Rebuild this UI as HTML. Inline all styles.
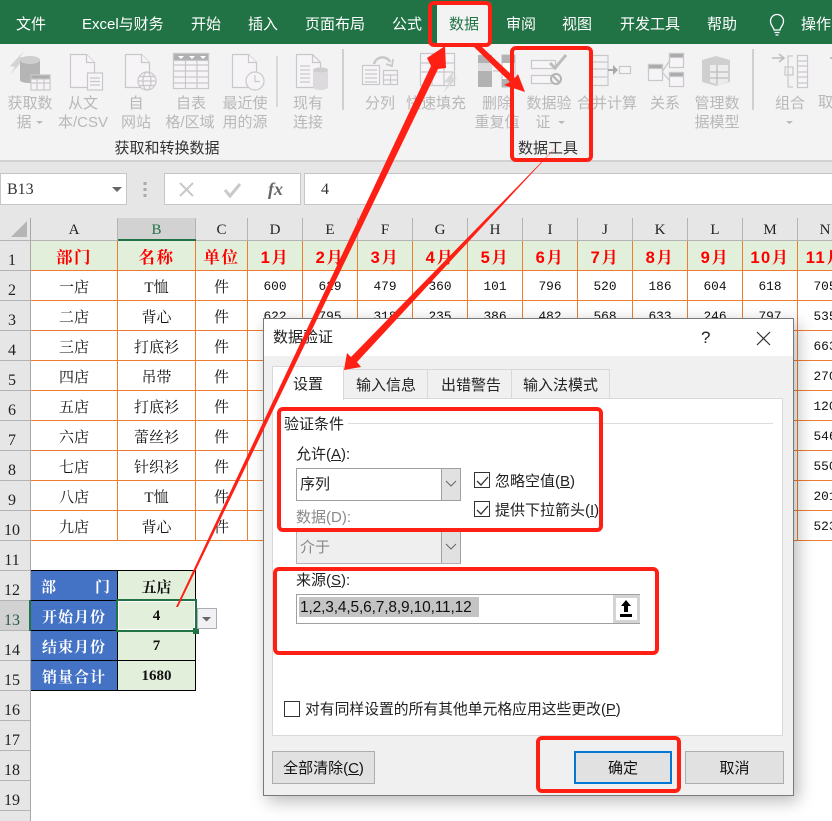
<!DOCTYPE html>
<html lang="zh"><head><meta charset="utf-8"><title>数据验证</title>
<style>
html,body{margin:0;padding:0;background:#fff}
#p{position:relative;width:832px;height:821px;overflow:hidden;background:#fff;font-family:"Liberation Sans","Noto Sans CJK SC",sans-serif;font-size:15px;color:#222}
.t{position:absolute;white-space:nowrap;line-height:20px}
.c{position:absolute;white-space:nowrap;line-height:19px;transform:translateX(-50%);text-align:center}
.tab{color:#fff;top:15px}
.r{color:#b8b8b8}
.b{position:absolute;box-sizing:border-box}
svg{position:absolute;left:0;top:0}
table{position:absolute;border-collapse:separate;border-spacing:0;table-layout:fixed}
#d td{box-sizing:border-box;height:30px;padding:1px 0 0;text-align:center;border-right:1px solid #ed7d31;border-bottom:1px solid #ed7d31;font:15px "Liberation Serif","Noto Serif CJK SC",serif;color:#111}
#d td.n{font:12.800px "Liberation Mono",monospace;padding-top:2px}
#d tr:first-child td{background:#e2efda;color:#f00;font:bold 16.500px "Liberation Sans","Noto Serif CJK SC",serif;letter-spacing:1.500px;padding-top:1px}
#s td{box-sizing:border-box;height:30px;padding:1px 0 0;text-align:center;border-right:1px solid #000;border-bottom:1px solid #000;font:bold 15px "Liberation Serif","Noto Serif CJK SC",serif;color:#111;background:#e2efda}
#s td.h{background:#4472c4;color:#fff;letter-spacing:1px;font-family:"Noto Serif CJK SC",serif}
.rh{position:absolute;left:0;width:30px;height:30px;box-sizing:border-box;border-bottom:1px solid #b4b4b4;background:#e6e6e6;font:16px/26px "Liberation Serif",serif;color:#222;padding-right:6px;text-align:center;padding-top:7px}
.ch{position:absolute;top:218px;height:22px;box-sizing:border-box;border-right:1px solid #b4b4b4;background:#e6e6e6;text-align:center;font:15px/25px "Liberation Serif",serif;color:#222}
.cb{position:absolute;width:16px;height:16px;box-sizing:border-box;border:1px solid #333;background:#fff}
.btn{position:absolute;top:751px;height:33px;box-sizing:border-box;border:1px solid #adadad;background:#e1e1e1;text-align:center;line-height:33px;color:#111}
.u{text-decoration:underline}
</style></head><body><div id="p">

<div class="b" style="left:0;top:0;width:832px;height:44px;background:#217346"></div>
<div class="t tab" style="left:16px">文件</div>
<div class="t tab" style="left:82px">Excel与财务</div>
<div class="t tab" style="left:191px">开始</div>
<div class="t tab" style="left:248px">插入</div>
<div class="t tab" style="left:305px">页面布局</div>
<div class="t tab" style="left:392px">公式</div>
<div class="b" style="left:437px;top:3px;width:54px;height:41px;background:#f3f3f3"></div>
<div class="t" style="left:449px;top:15px;color:#217346">数据</div>
<div class="t tab" style="left:506px">审阅</div>
<div class="t tab" style="left:562px">视图</div>
<div class="t tab" style="left:620px">开发工具</div>
<div class="t tab" style="left:707px">帮助</div>
<div class="t tab" style="left:801px">操作</div>
<svg width="832" height="44" fill="none" stroke="#fff" stroke-width="1.3"><path d="M774 30c0-3-3.500-4-3.500-9a6.500 6.500 0 0 1 13 0c0 5-3.500 6-3.500 9zM774.500 32.500h5M775.500 35h3"/></svg>

<div class="b" style="left:0;top:44px;width:832px;height:116px;background:#f3f3f3"></div>
<div class="b" style="left:0;top:160px;width:832px;height:58px;background:#e6e6e6;border-top:2px solid #d2d2d2"></div>

<svg width="832" height="110" fill="#f6f4f7" stroke="#c9c7ca" stroke-width="1.2">
<path d="M24 51L10 66l5 1-5 8 15-17-5-1z" fill="#d4d4d4" stroke="none"/>
<path d="M20 60v20c0 4 20 4 20 0V60z" fill="#b5b5b5" stroke="none"/><ellipse cx="30" cy="60" rx="10" ry="4" fill="#cfcfcf" stroke="none"/>
<rect x="31" y="75" width="19" height="15"/><rect x="31" y="75" width="19" height="4" fill="#adadad"/><path d="M31 83h19M37 79v11M44 79v11"/>
<path d="M70.500 54.500h16l8 8v25h-24z"/><path d="M86.500 54.500v8h8"/><rect x="87.500" y="73" width="15" height="17"/><path d="M90 78h10M90 81.500h10M90 85h10"/>
<path d="M125.500 54.500h16l8 8v25h-24z"/><path d="M141.500 54.500v8h8"/><circle cx="147" cy="81" r="9"/><ellipse cx="147" cy="81" rx="4" ry="9" fill="none"/><path d="M138 81h18M139.500 76.500h15M139.500 85.500h15" fill="none"/>
<rect x="173.500" y="53.500" width="35" height="35"/><rect x="173.500" y="53.500" width="35" height="7" fill="#b0b0b0"/><path d="M173 65h36M173 71h36M173 77h36M173 83h36M185.500 60v28M197 60v28" fill="none"/>
<path d="M178 56h6l-3 3zM189 56h6l-3 3zM200 56h6l-3 3z" fill="#fff" stroke="none"/>
<path d="M232.500 54.500h16l8 8v25h-24z"/><path d="M248.500 54.500v8h8"/><circle cx="255" cy="81" r="9"/><path d="M255 75v6.500h5" fill="none"/>
<path d="M277 56v51" fill="none"/>
<path d="M296.500 54.500h16l8 8v25h-24z"/><path d="M312.500 54.500v8h8M300 66h10M300 70h10M300 74h10M300 78h10M300 82h10" fill="none"/>
<path d="M313 70v17c0 4 15 4 15 0V70z" fill="#dcdadc" stroke="none"/><ellipse cx="320.500" cy="70" rx="7.500" ry="2.500" fill="#cfcdcf" stroke="none"/>
<path d="M343 49v106M753 49v106" stroke="#b9b9b9" fill="none"/>
<rect x="362.500" y="65.500" width="17" height="19"/><path d="M365 70h12M365 74h12M365 78h12M365 82h12" fill="none"/><rect x="383.500" y="70.500" width="14" height="14"/><path d="M383 75h15M383 80h15M390.500 75v10" fill="none"/>
<path d="M374 64c2-8 13-9 16-2" fill="none" stroke-width="2.500"/><path d="M386 64l6 2 1-7" fill="none" stroke-width="1.800"/>
<rect x="420.500" y="53.500" width="34" height="32"/><path d="M420 63h35M420 72h35M432 54v32M444 54v32" fill="none"/><path d="M456 68l-12 14 5 1-6 10 14-15-5-1 4-9z" fill="#d8d8d8" stroke="none"/>
<rect x="478" y="55" width="14" height="32" fill="#b2b2b2" stroke="none"/><rect x="478" y="63" width="14" height="8" fill="#dbdbdb" stroke="none"/><rect x="502" y="55" width="13" height="32" fill="#fff"/><rect x="502" y="55" width="13" height="8" fill="#b2b2b2" stroke="none"/><rect x="502" y="79" width="13" height="8" fill="#b2b2b2" stroke="none"/><path d="M493 71h9" fill="none"/>
<rect x="531.500" y="60.500" width="24" height="8" fill="#f7f5f8"/><rect x="531.500" y="75.500" width="24" height="8" fill="#f7f5f8"/><path d="M550 63l5 5 11-13" fill="none" stroke="#bdbdbd" stroke-width="3"/><circle cx="556" cy="79" r="5" fill="#f3f3f3" stroke="#b4b4b4" stroke-width="2"/><path d="M552.500 75.500l7 7" stroke="#b4b4b4" stroke-width="2"/>
<path d="M591 55.500h17v30h-17M591 62h17M591 69h17M591 77h17" fill="none"/><path d="M608 70h9" stroke="#aaa" stroke-width="2" fill="none"/><path d="M613 65l5 5-5 5z" fill="#aaa" stroke="none"/><rect x="619.500" y="66.500" width="11" height="7"/>
<rect x="648.500" y="64.500" width="14" height="16"/><rect x="648.500" y="64.500" width="14" height="4" fill="#aaa"/><rect x="669.500" y="53.500" width="14" height="14"/><rect x="669.500" y="53.500" width="14" height="4" fill="#aaa"/><rect x="669.500" y="72.500" width="14" height="14"/><rect x="669.500" y="72.500" width="14" height="4" fill="#aaa"/><path d="M662 72l8-12M662 72l8 9" fill="none"/>
<path d="M702 60l14-4 14 4v22l-14 4-14-4z" fill="#cfcfcf" stroke="none"/><path d="M710 65h18v17l-9 3-9-3z" fill="#ececec" stroke="none"/><path d="M717 65v19M710 72h18M710 78h18" fill="none" stroke="#bbb"/>
<path d="M772 58h11M779 54l5 4-5 4" fill="none" stroke="#bdbdbd" stroke-width="1.600"/><path d="M793 56h-5v16M793 87h-5V72" fill="none"/><rect x="785" y="67" width="8" height="8" fill="none"/><rect x="797.500" y="55.500" width="10" height="32"/><path d="M797 61h11M797 66h11M797 72h11M797 77h11M797 83h11" fill="none"/>
<path d="M830 58h2" stroke="#bdbdbd" stroke-width="2" fill="none"/>
</svg>

<div class="c r" style="left:30px;top:94px">获取数</div><div class="c r" style="left:24px;top:113px">据</div>
<div class="c r" style="left:83px;top:94px">从文</div><div class="c r" style="left:83px;top:113px">本/CSV</div>
<div class="c r" style="left:136px;top:94px">自</div><div class="c r" style="left:136px;top:113px">网站</div>
<div class="c r" style="left:191px;top:94px">自表</div><div class="c r" style="left:190px;top:113px">格/区域</div>
<div class="c r" style="left:245px;top:94px">最近使</div><div class="c r" style="left:245px;top:113px">用的源</div>
<div class="c r" style="left:308px;top:94px">现有</div><div class="c r" style="left:308px;top:113px">连接</div>
<div class="c r" style="left:380px;top:94px">分列</div>
<div class="c r" style="left:436px;top:94px">快速填充</div>
<div class="c r" style="left:497px;top:94px">删除</div><div class="c r" style="left:497px;top:113px">重复值</div>
<div class="c r" style="left:549px;top:94px">数据验</div><div class="c r" style="left:543px;top:113px">证</div>
<div class="c r" style="left:607px;top:94px">合并计算</div>
<div class="c r" style="left:665px;top:94px">关系</div>
<div class="c r" style="left:717px;top:94px">管理数</div><div class="c r" style="left:717px;top:113px">据模型</div>
<div class="c r" style="left:790px;top:94px">组合</div>
<div class="t r" style="left:818px;top:93px">取</div>
<svg width="832" height="130" fill="#b9b9b9"><path d="M36 121h7l-3.500 3zM558 121h7l-3.500 3zM786 121h7l-3.500 3z"/></svg>
<div class="c" style="left:167px;top:139px;color:#333">获取和转换数据</div>
<div class="c" style="left:548px;top:139px;color:#333">数据工具</div>

<div class="b" style="left:0;top:173px;width:127px;height:32px;background:#fff;border:1px solid #c6c6c6"></div>
<div class="t" style="left:7px;top:180px;font-family:'Liberation Serif',serif;font-size:16px;color:#333">B13</div>
<div class="b" style="left:164px;top:173px;width:137px;height:32px;background:#fff;border:1px solid #c6c6c6"></div>
<div class="b" style="left:304px;top:173px;width:530px;height:32px;background:#fff;border:1px solid #c6c6c6;border-right:0"></div>
<div class="t" style="left:321px;top:180px;font-family:'Liberation Serif',serif;font-size:16px;color:#333">4</div>
<div class="t" style="left:268px;top:179px;font:italic bold 18px/20px 'Liberation Serif',serif;color:#666">fx</div>
<svg width="832" height="210" fill="none"><path d="M112 187h10l-5 5z" fill="#666"/><path d="M145 182v3M145 188v3M145 194v3" stroke="#aaa" stroke-width="3"/><path d="M180 183l13 13M193 183l-13 13" stroke="#c9c9c9" stroke-width="2"/><path d="M225 190l5 6 10-12" stroke="#c9c9c9" stroke-width="3"/></svg>

<div class="b" style="left:0;top:218px;width:31px;height:22px;background:#e6e6e6;border-right:1px solid #b4b4b4"></div>
<svg width="31" height="240"><path d="M27 221v16H11z" fill="#b5b5b5"/></svg>
<div class="ch" style="left:31px;width:87px">A</div>
<div class="ch" style="left:118px;width:78px;background:#d2d2d2;color:#217346">B</div>
<div class="ch" style="left:196px;width:52px">C</div>
<div class="ch" style="left:248px;width:55px">D</div>
<div class="ch" style="left:303px;width:55px">E</div>
<div class="ch" style="left:358px;width:55px">F</div>
<div class="ch" style="left:413px;width:55px">G</div>
<div class="ch" style="left:468px;width:55px">H</div>
<div class="ch" style="left:523px;width:55px">I</div>
<div class="ch" style="left:578px;width:55px">J</div>
<div class="ch" style="left:633px;width:55px">K</div>
<div class="ch" style="left:688px;width:55px">L</div>
<div class="ch" style="left:743px;width:55px">M</div>
<div class="ch" style="left:798px;width:55px">N</div>
<div class="b" style="left:0;top:240px;width:832px;height:1px;background:#b4b4b4"></div>
<div class="b" style="left:118px;top:239px;width:78px;height:2px;background:#217346"></div>

<div class="rh" style="top:241px">1</div><div class="rh" style="top:271px">2</div><div class="rh" style="top:301px">3</div><div class="rh" style="top:331px">4</div><div class="rh" style="top:361px">5</div><div class="rh" style="top:391px">6</div><div class="rh" style="top:421px">7</div><div class="rh" style="top:451px">8</div><div class="rh" style="top:481px">9</div><div class="rh" style="top:511px">10</div><div class="rh" style="top:541px">11</div><div class="rh" style="top:571px">12</div><div class="rh" style="top:601px;background:#d2d2d2;color:#2a5a44">13</div><div class="rh" style="top:631px">14</div><div class="rh" style="top:661px">15</div><div class="rh" style="top:691px">16</div><div class="rh" style="top:721px">17</div><div class="rh" style="top:751px">18</div><div class="rh" style="top:781px">19</div><div class="rh" style="top:811px"></div>
<div class="b" style="left:30px;top:218px;width:1px;height:603px;background:#a8a8a8"></div>

<table id="d" style="left:31px;top:241px;width:822px">
<colgroup><col style="width:87px"><col style="width:78px"><col style="width:52px"><col style="width:55px"><col style="width:55px"><col style="width:55px"><col style="width:55px"><col style="width:55px"><col style="width:55px"><col style="width:55px"><col style="width:55px"><col style="width:55px"><col style="width:55px"><col style="width:55px"></colgroup>
<tr><td>部门</td><td>名称</td><td>单位</td><td>1月</td><td>2月</td><td>3月</td><td>4月</td><td>5月</td><td>6月</td><td>7月</td><td>8月</td><td>9月</td><td>10月</td><td>11月</td></tr>
<tr><td>一店</td><td>T恤</td><td>件</td><td class="n">600</td><td class="n">629</td><td class="n">479</td><td class="n">360</td><td class="n">101</td><td class="n">796</td><td class="n">520</td><td class="n">186</td><td class="n">604</td><td class="n">618</td><td class="n">705</td></tr>
<tr><td>二店</td><td>背心</td><td>件</td><td class="n">622</td><td class="n">795</td><td class="n">318</td><td class="n">235</td><td class="n">386</td><td class="n">482</td><td class="n">568</td><td class="n">633</td><td class="n">246</td><td class="n">797</td><td class="n">535</td></tr>
<tr><td>三店</td><td>打底衫</td><td>件</td><td></td><td></td><td></td><td></td><td></td><td></td><td></td><td></td><td></td><td></td><td class="n">663</td></tr>
<tr><td>四店</td><td>吊带</td><td>件</td><td></td><td></td><td></td><td></td><td></td><td></td><td></td><td></td><td></td><td></td><td class="n">270</td></tr>
<tr><td>五店</td><td>打底衫</td><td>件</td><td></td><td></td><td></td><td></td><td></td><td></td><td></td><td></td><td></td><td></td><td class="n">120</td></tr>
<tr><td>六店</td><td>蕾丝衫</td><td>件</td><td></td><td></td><td></td><td></td><td></td><td></td><td></td><td></td><td></td><td></td><td class="n">546</td></tr>
<tr><td>七店</td><td>针织衫</td><td>件</td><td></td><td></td><td></td><td></td><td></td><td></td><td></td><td></td><td></td><td></td><td class="n">550</td></tr>
<tr><td>八店</td><td>T恤</td><td>件</td><td></td><td></td><td></td><td></td><td></td><td></td><td></td><td></td><td></td><td></td><td class="n">201</td></tr>
<tr><td>九店</td><td>背心</td><td>件</td><td></td><td></td><td></td><td></td><td></td><td></td><td></td><td></td><td></td><td></td><td class="n">523</td></tr>
</table>

<div class="b" style="left:31px;top:570px;width:165px;height:1px;background:#000"></div>
<table id="s" style="left:31px;top:571px;width:165px">
<colgroup><col style="width:87px"><col style="width:78px"></colgroup>
<tr><td class="h" style="text-align:left;padding-left:10px">部<span style="padding-left:38px">门</span></td><td>五店</td></tr>
<tr><td class="h">开始月份</td><td>4</td></tr>
<tr><td class="h">结束月份</td><td>7</td></tr>
<tr><td class="h">销量合计</td><td>1680</td></tr>
</table>
<div class="b" style="left:116px;top:599px;width:81px;height:33px;border:2px solid #217346;outline:1px solid #fff;outline-offset:-3px"></div>
<div class="b" style="left:193px;top:628px;width:6px;height:6px;background:#217346;border:0"></div>
<div class="b" style="left:29px;top:600px;width:2px;height:31px;background:#217346"></div>
<div class="b" style="left:197px;top:608px;width:20px;height:21px;background:#f1f1f4;border:1px solid #a9adb8"></div>
<svg width="220" height="630"><path d="M202 617h9l-4.500 4.500z" fill="#666"/></svg>

<!-- dialog -->
<div class="b" style="left:263px;top:318px;width:531px;height:478px;background:#f0f0f0;border:1px solid #7a7a7a;box-shadow:4px 5px 16px rgba(0,0,0,.28)"></div>
<div class="b" style="left:264px;top:319px;width:529px;height:37px;background:#fff"></div>
<div class="t" style="left:273px;top:328px">数据验证</div>
<div class="t" style="left:701px;top:328px;font-size:17px">?</div>
<svg width="832" height="360" fill="none"><path d="M757 332l13 13M770 332l-13 13" stroke="#333" stroke-width="1.200"/></svg>
<div class="b" style="left:272px;top:398px;width:511px;height:338px;background:#fff;border:1px solid #d9d9d9"></div>
<div class="b" style="left:343px;top:369px;width:85px;height:30px;background:#f0f0f0;border:1px solid #d9d9d9"></div>
<div class="b" style="left:427px;top:369px;width:85px;height:30px;background:#f0f0f0;border:1px solid #d9d9d9"></div>
<div class="b" style="left:511px;top:369px;width:99px;height:30px;background:#f0f0f0;border:1px solid #d9d9d9"></div>
<div class="b" style="left:272px;top:366px;width:72px;height:34px;background:#fff;border:1px solid #d9d9d9;border-bottom:0"></div>
<div class="t" style="left:293px;top:375px">设置</div>
<div class="t" style="left:356px;top:376px">输入信息</div>
<div class="t" style="left:441px;top:376px">出错警告</div>
<div class="t" style="left:523px;top:376px">输入法模式</div>
<div class="t" style="left:284px;top:415px">验证条件</div>
<div class="b" style="left:348px;top:423px;width:425px;height:1px;background:#dcdcdc"></div>
<div class="t" style="left:296px;top:445px">允许(<span class="u">A</span>):</div>
<div class="b" style="left:296px;top:468px;width:165px;height:33px;background:#fff;border:1px solid #a0a0a0"></div>
<div class="b" style="left:441px;top:469px;width:20px;height:31px;background:#e1e1e1;border-left:1px solid #a0a0a0;border-right:1px solid #a0a0a0"></div>
<div class="t" style="left:300px;top:475px">序列</div>
<div class="t" style="left:296px;top:508px;color:#8a8a8a">数据(D):</div>
<div class="b" style="left:296px;top:531px;width:165px;height:33px;background:#efefef;border:1px solid #b4b4b4"></div>
<div class="b" style="left:441px;top:532px;width:20px;height:31px;background:#e1e1e1;border-left:1px solid #a0a0a0;border-right:1px solid #a0a0a0"></div>
<div class="t" style="left:300px;top:538px;color:#8a8a8a">介于</div>
<div class="cb" style="left:474px;top:472px"></div>
<div class="t" style="left:495px;top:472px">忽略空值(<span class="u">B</span>)</div>
<div class="cb" style="left:474px;top:501px"></div>
<div class="t" style="left:495px;top:501px">提供下拉箭头(<span class="u">I</span>)</div>
<div class="t" style="left:296px;top:571px">来源(<span class="u">S</span>):</div>
<div class="b" style="left:296px;top:594px;width:344px;height:30px;background:#fff;border:1px solid #a0a0a0"></div>
<div class="b" style="left:299px;top:597px;width:180px;height:20px;background:#c4c4c4"></div>
<div class="t" style="left:300px;top:598px;font-size:15.500px;color:#111;letter-spacing:-.15px">1,2,3,4,5,6,7,8,9,10,11,12</div>
<div class="b" style="left:613px;top:595px;width:27px;height:28px;background:#fff;border:3px solid #d4d4d4"></div>
<svg width="832" height="800" fill="none">
<path d="M446 481l5 5 5-5M446 544l5 5 5-5" stroke="#666"/>
<path d="M477 481l4 4 7-8M477 510l4 4 7-8" stroke="#333" stroke-width="1.300"/>
<path d="M626 600l5 6h-3v6h-4v-6h-3z" fill="#000"/><path d="M620 614h12v3h-12z" fill="#000"/>
</svg>
<div class="cb" style="left:284px;top:701px"></div>
<div class="t" style="left:305px;top:700px;font-size:14.800px">对有同样设置的所有其他单元格应用这些更改(<span class="u">P</span>)</div>
<div class="btn" style="left:272px;width:103px">全部清除(<span class="u">C</span>)</div>
<div class="btn" style="left:574px;width:98px;border:2px solid #0078d7;line-height:31px">确定</div>
<div class="btn" style="left:685px;width:99px">取消</div>

<!-- annotations -->
<svg width="832" height="821" fill="none" stroke="#ff2015" stroke-width="4" stroke-linejoin="round">
<rect x="430" y="3" width="60" height="42" rx="4"/>
<rect x="512" y="48" width="79" height="112" rx="4"/>
<rect x="279" y="409" width="322" height="121" rx="4"/>
<rect x="275" y="569" width="382" height="84" rx="4"/>
<rect x="538" y="738" width="141" height="53" rx="4"/>
<g fill="#ff2015" stroke="none">
<polygon points="176,607 431,66 427,58 445,46 446,68 438,69 178,607"/>
<polygon points="474,47 482,47 515,78 518,74 525,92 504,85 510,82"/>
<polygon points="559,144 357,362 361,367 344,370 347,353 351,357"/>
</g>
</svg>
</div></body></html>
